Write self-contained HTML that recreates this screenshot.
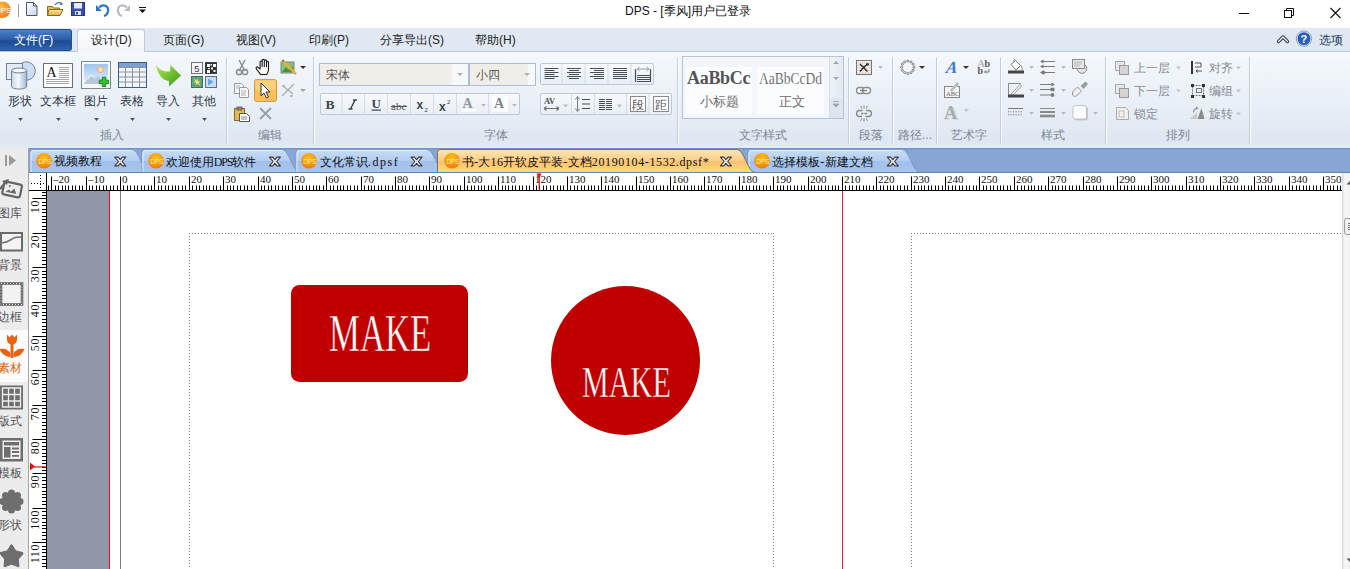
<!DOCTYPE html>
<html><head><meta charset="utf-8">
<style>
*{margin:0;padding:0;box-sizing:border-box}
html,body{width:1350px;height:569px;overflow:hidden;background:#fff;font-family:"Liberation Sans",sans-serif;font-size:12px;color:#222}
.a{position:absolute}
#title{left:0;top:0;width:1350px;height:28px;background:#fff}
#menu{left:0;top:28px;width:1350px;height:24px;background:#dfe8f3;border-bottom:1px solid #b9c9dd}
.mi{top:5px;font-size:12px;line-height:14px;color:#222;white-space:nowrap}
#ribbon{left:0;top:52px;width:1350px;height:97px;background:linear-gradient(#f5f8fc 0%,#e9eff7 55%,#dee7f2 92%,#e3ebf5 100%);border-bottom:1px solid #86a4cf}
#tabbar{left:28px;top:148px;width:1322px;height:25px;background:#86a6d6}
#sidebar{left:0;top:148px;width:29px;height:421px;background:#ececec;border-right:1px solid #a6a6a6}
.sl{left:-2px;font-size:12px;line-height:14px;color:#555;white-space:nowrap}
#hruler{left:29px;top:173px;width:1313px;height:18px;background:#fff;border-bottom:1px solid #000}
#vruler{left:29px;top:191px;width:18px;height:378px;background:#fff;border-right:1px solid #000}
#gray{left:47px;top:191px;width:61px;height:378px;background:#8e98a9}
#canvas{left:108px;top:191px;width:1234px;height:378px;background:#fff;overflow:hidden}
#vscroll{left:1342px;top:173px;width:8px;height:396px;background:linear-gradient(90deg,#e9e9e9,#f7f7f7 30%,#f2f2f2);border-left:1px solid #dadada}
.lbl{top:76px;color:#7b8696;font-size:12px;line-height:14px;white-space:nowrap}
.sep{position:absolute;top:5px;width:1px;height:87px;background:#c2cfe0;box-shadow:1px 0 0 #f8fbff}
.combo{position:absolute;border:1px solid #abbdd3;background:linear-gradient(90deg,#f1eeea 0%,#f1eeea 88%,#f7f8fa 90%);}
.ct{position:absolute;left:6px;top:4px;font-size:12px;line-height:14px;color:#555;font-family:"Liberation Serif",serif}
.dd{position:absolute;top:9px;width:0;height:0;border-left:3px solid transparent;border-right:3px solid transparent;border-top:3px solid #aab0b8}
.bgrp{position:absolute;border:1px solid #bccbdc;border-radius:2px;background:linear-gradient(#f7f9fc,#e9eef5)}
.dis{font-size:12px;line-height:14px;color:#858b92;white-space:nowrap}
.tt{top:155px;font-size:12px;line-height:14px;color:#111;white-space:nowrap;font-family:"Liberation Mono",monospace}
.tt m{font-family:"Liberation Serif",serif;font-size:12px;letter-spacing:.45px}
.rn{font-family:"Liberation Serif",serif;font-size:11px;fill:#111;letter-spacing:0}
.mk{font-family:"Liberation Serif",serif;color:#fff;white-space:nowrap;-webkit-text-stroke:.5px #c00000}
.rv{font-family:"Liberation Serif",serif;font-size:12px;fill:#111;letter-spacing:.6px}
.dh{height:1px;background:repeating-linear-gradient(90deg,#7a7a7a 0 1px,transparent 1px 3px)}
.dv{width:1px;background:repeating-linear-gradient(180deg,#7a7a7a 0 1px,transparent 1px 3px)}
.big{top:42px;font-size:12px;line-height:14px;color:#2c3645;white-space:nowrap}
</style></head><body>
<div id="title" class="a">
<svg class="a" style="left:0;top:0" width="150" height="28">
 <defs><radialGradient id="og" cx="40%" cy="35%" r="70%"><stop offset="0" stop-color="#ffc04a"/><stop offset="1" stop-color="#ef7d08"/></radialGradient>
 <linearGradient id="pg" x1="0" y1="0" x2="1" y2="1"><stop offset="0" stop-color="#fff"/><stop offset="1" stop-color="#c9d3e6"/></linearGradient>
 <linearGradient id="fg" x1="0" y1="0" x2="0" y2="1"><stop offset="0" stop-color="#fde9a0"/><stop offset="1" stop-color="#e2ad3c"/></linearGradient></defs>
 <circle cx="2.5" cy="9.8" r="8.2" fill="url(#og)"/>
 <text x="-5" y="13" font-size="8" fill="#fff" font-family="Liberation Sans">DPS</text>
 <rect x="18" y="4" width="1" height="13" fill="#9a9a9a"/>
 <path d="M26.5 2.5h7l3.5 3.5v9.5h-10.5z" fill="url(#pg)" stroke="#4a5668" stroke-width="1"/>
 <path d="M33.5 2.5v3.5h3.5" fill="none" stroke="#4a5668"/>
 <path d="M47.5 6.5h5l1 1.5h6v7.5h-12z" fill="#e9c060" stroke="#8a6a1a"/>
 <path d="M49 9.5h14l-3 6h-12.5z" fill="url(#fg)" stroke="#8a6a1a"/>
 <path d="M55 5c2-3 5-3 7-1" fill="none" stroke="#3a6fb8" stroke-width="1.3"/><path d="M61 2l2 2.5-3 .8z" fill="#3a6fb8"/>
 <rect x="71.5" y="2.5" width="13" height="13" fill="#3b4fb0" stroke="#2a3580"/>
 <rect x="74" y="3" width="8" height="5.5" fill="#e8ecf6"/>
 <rect x="75" y="11" width="6" height="4" fill="#dde3f0"/><rect x="76" y="12" width="2" height="2.5" fill="#3b4fb0"/>
 <path d="M99 7.5c4-4 10-2 9 4-.5 2.5-2.5 4-4 4.5" fill="none" stroke="#2f72d0" stroke-width="2.2"/>
 <path d="M96 5v6h6z" fill="#2f72d0"/>
 <path d="M127 7.5c-4-4-10-2-9 4 .5 2.5 2.5 4 4 4.5" fill="none" stroke="#b8bcc2" stroke-width="2.2"/>
 <path d="M130 5v6h-6z" fill="#b8bcc2"/>
 <rect x="139" y="7" width="7" height="1" fill="#111"/><path d="M139 9.5h7l-3.5 3.5z" fill="#111"/>
</svg>
<div class="a" style="left:625px;top:3px;font-size:12px;color:#111;line-height:16px;white-space:nowrap">DPS - [季风]用户已登录</div>
<svg class="a" style="left:1230px;top:0" width="120" height="28">
 <rect x="9" y="13" width="10" height="1" fill="#111"/>
 <rect x="54.5" y="10.5" width="7" height="7" fill="none" stroke="#111"/>
 <path d="M56.5 10.5v-2h7v7h-2" fill="none" stroke="#111"/>
 <path d="M100.5 8l10 10M110.5 8l-10 10" stroke="#111" stroke-width="1.1"/>
</svg>
</div>
<div id="menu" class="a">
<div class="a" style="left:0;top:1px;width:72px;height:22px;border-radius:0 3px 3px 0;background:linear-gradient(#4a7fc9 0%,#2d5fab 45%,#1d4a92 55%,#2f62ae 100%);border:1px solid #23508f;border-left:none"></div>
<div class="a mi" style="left:14px;color:#fff">文件(F)</div>
<div class="a" style="left:77px;top:1px;width:68px;height:24px;border-radius:3px 3px 0 0;background:linear-gradient(#fbfcfe,#f2f6fb);border:1px solid #bccbe0;border-bottom:none"></div>
<div class="a mi" style="left:91px">设计(D)</div>
<div class="a mi" style="left:163px">页面(G)</div>
<div class="a mi" style="left:236px">视图(V)</div>
<div class="a mi" style="left:309px">印刷(P)</div>
<div class="a mi" style="left:380px">分享导出(S)</div>
<div class="a mi" style="left:475px">帮助(H)</div>
<svg class="a" style="left:1270px;top:0" width="80" height="24">
 <path d="M8.5 13.5l4.5-4.5 4.5 4.5" fill="none" stroke="#2a3a50" stroke-width="3.2" stroke-linejoin="round" stroke-linecap="round"/><path d="M8.5 13.5l4.5-4.5 4.5 4.5" fill="none" stroke="#fff" stroke-width="1.2" stroke-linejoin="round" stroke-linecap="round"/>
 <circle cx="34" cy="10.7" r="7.7" fill="#e8eef8" stroke="#8aa2c8"/>
 <circle cx="34" cy="10.7" r="6.5" fill="#2a5db8"/>
 <text x="30.5" y="15" font-size="11" font-weight="bold" fill="#fff" font-family="Liberation Sans">?</text>
</svg>
<div class="a mi" style="left:1319px;color:#1e3a5c">选项</div>
</div>
<div id="ribbon" class="a">
<!-- separators -->
<div class="sep" style="left:226px"></div><div class="sep" style="left:313px"></div><div class="sep" style="left:677px"></div>
<div class="sep" style="left:848px"></div><div class="sep" style="left:892px"></div><div class="sep" style="left:936px"></div>
<div class="sep" style="left:1000px"></div><div class="sep" style="left:1105px"></div><div class="sep" style="left:1249px"></div>
<!-- group labels -->
<div class="a lbl" style="left:100px">插入</div>
<div class="a lbl" style="left:258px">编辑</div>
<div class="a lbl" style="left:484px">字体</div>
<div class="a lbl" style="left:739px">文字样式</div>
<div class="a lbl" style="left:859px">段落</div>
<div class="a lbl" style="left:898px">路径...</div>
<div class="a lbl" style="left:951px">艺术字</div>
<div class="a lbl" style="left:1041px">样式</div>
<div class="a lbl" style="left:1166px">排列</div>
<!-- INSERT GROUP -->
<svg class="a" style="left:0;top:0" width="226" height="96">
 <defs>
  <linearGradient id="cyl" x1="0" y1="0" x2="1" y2="0"><stop offset="0" stop-color="#c6d6ea"/><stop offset=".45" stop-color="#f4f8fd"/><stop offset="1" stop-color="#9fb6d6"/></linearGradient>
  <linearGradient id="sky" x1="0" y1="0" x2="0" y2="1"><stop offset="0" stop-color="#9cc6f2"/><stop offset="1" stop-color="#e6f1fc"/></linearGradient>
  <linearGradient id="grn" x1="0" y1="0" x2="1" y2="1"><stop offset="0" stop-color="#b6e84a"/><stop offset="1" stop-color="#2e9a1a"/></linearGradient>
 </defs>
 <!-- shape -->
 <rect x="6.5" y="11.5" width="16" height="16" fill="#e3ecf8" stroke="#6f8090"/>
 <path d="M22.5 10.5A9.2 9.2 0 1 1 22.5 27.5z" fill="#cfdff3" stroke="#6f8090"/>
 <path d="M11.5 18.5v16c0 1.5 3.4 2.5 7.6 2.5s7.6-1 7.6-2.5v-16z" fill="url(#cyl)" stroke="#6f8090"/>
 <ellipse cx="19.1" cy="18.5" rx="7.6" ry="2.4" fill="#f6f9fd" stroke="#6f8090"/>
 <!-- textbox -->
 <rect x="43.5" y="11.5" width="29" height="24" fill="#fff" stroke="#6a6e75"/>
 <text x="46.5" y="25" font-family="Liberation Serif" font-size="14" fill="#111">A</text>
 <path d="M59 15.5h10M59 17.5h10M59 19.5h10M59 21.5h10M59 23.5h10M59 25.5h10M46 27.5h23M46 29.5h23M46 31.5h23" stroke="#8a8e96" stroke-width=".8"/>
 <!-- picture -->
 <rect x="81.5" y="9.5" width="29" height="27" fill="#f4f6f8" stroke="#7f8790"/>
 <rect x="84" y="12" width="24" height="20" fill="url(#sky)"/>
 <path d="M84 32l7-9 4 4 3-3 8 8z" fill="#b9c6d6"/><path d="M88 27l3-4 2 2" fill="none" stroke="#fff"/>
 <circle cx="100.5" cy="17.5" r="3" fill="#fde0b8" stroke="#f2a060"/>
 <path d="M102.3 25.2h3.4v3h3v3.4h-3v3h-3.4v-3h-3v-3.4h3z" fill="#32c42a" stroke="#1a7a1a" stroke-width=".9"/>
 <!-- table -->
 <rect x="118.5" y="10.5" width="28" height="25" fill="#f2f5fa" stroke="#3d5a8c"/>
 <rect x="119" y="11" width="27" height="4" fill="#7d9fd6"/>
 <path d="M119 15.5h27M119 20h27M119 25h27M119 30h27M125.5 15v20M132.5 15v20M139.5 15v20" stroke="#8d949e"/>
 <!-- import arrow -->
 <path d="M156 13Q161 20.5 170 19.5L170.5 13L181 23.5L169 34.5L169 29Q159 28 156 13Z" fill="url(#grn)"/>
 <!-- other -->
 <rect x="191.5" y="10.5" width="11" height="11" fill="#f6f6f6" stroke="#6e737a"/>
 <text x="194" y="19.5" font-size="9.5" fill="#333" font-family="Liberation Mono">5</text>
 <rect x="205.5" y="10.5" width="11" height="11" fill="#333" stroke="#444"/>
 <path d="M207 12h3v3h-3zM213 12h3v3h-3zM207 18h3v3h-3zM211 15.5h2v2h-2zM213.5 18h2v2h-2zM210.5 12h1.5v1.5h-1.5zM208 16h2v1h-2z" fill="#fff"/>
 <rect x="191.5" y="24.5" width="11" height="11" fill="#5aa87a" stroke="#4a6a60"/>
 <path d="M197 26.5l1 2.5 2.5 1-2.5 1-1 2.5-1-2.5-2.5-1 2.5-1z" fill="#f4e87a"/><path d="M194 27l3 3M200 33l-3-3" stroke="#e8e27a" stroke-width="1"/>
 <rect x="205.5" y="24.5" width="11" height="11" fill="#c9dcf6" stroke="#5e6f88"/>
 <path d="M208 26.5v7l5.5-3.5z" fill="#6e9ee6"/>
 <!-- arrows -->
 <path d="M18 66h5l-2.5 3zM56 66h5l-2.5 3zM94 66h5l-2.5 3zM130 66h5l-2.5 3zM166 66h5l-2.5 3zM202 66h5l-2.5 3z" fill="#555"/>
</svg>
<div class="a big" style="left:8px">形状</div>
<div class="a big" style="left:40px">文本框</div>
<div class="a big" style="left:84px">图片</div>
<div class="a big" style="left:120px">表格</div>
<div class="a big" style="left:156px">导入</div>
<div class="a big" style="left:192px">其他</div>
<!-- EDIT GROUP -->
<svg class="a" style="left:226px;top:0" width="87" height="96">
 <!-- scissors -->
 <path d="M13 8l6 11M19 8l-6 11" stroke="#8a8f96" stroke-width="1.5"/>
 <circle cx="13" cy="20" r="2.6" fill="none" stroke="#8a8f96" stroke-width="1.5"/><circle cx="19" cy="20" r="2.6" fill="none" stroke="#8a8f96" stroke-width="1.5"/>
 <!-- hand -->
 <path d="M34.5 22.5c-1-2-3-4-4.2-5.8-.8-1.2.6-2.4 1.8-1.4l2 1.8V10c0-1.3 2-1.3 2 0v4.5V8.3c0-1.3 2.2-1.3 2.2 0v6.2V8.8c0-1.3 2.2-1.3 2.2 0v5.9V10.3c0-1.3 2-1.3 2 0V17c0 2.5-.8 4-1.8 5.5z" fill="#fff" stroke="#1a1a1a" stroke-width="1.1" stroke-linejoin="round"/>
 <!-- picture pencil -->
 <rect x="55" y="10" width="13" height="11" fill="#8fbf6a" stroke="#6a8a9a"/>
 <path d="M56 20l4-5 3 3 4-4v6z" fill="#4f8f3a"/>
 <path d="M56 8l14 14" stroke="#e0b040" stroke-width="2.5"/><path d="M56 8l2 0 0 2z" fill="#555"/>
 <path d="M74 14h6l-3 3z" fill="#333"/>
 <!-- copy -->
 <path d="M8.5 31.5h7l2 2v8h-9z" fill="#f4f4f4" stroke="#9a9a9a"/>
 <path d="M13.5 35.5h7l2 2v8h-9z" fill="#f8f8f8" stroke="#9a9a9a"/>
 <path d="M10 34h4M10 36h4M15 39h5M15 41h5M15 43h5" stroke="#b0b0b0"/>
 <!-- selected pointer -->
 <rect x="28.5" y="27.5" width="22" height="22" rx="2" fill="#f9c056" stroke="#e09a30"/>
 <rect x="29.5" y="28.5" width="20" height="9.5" rx="1" fill="#fcd27c"/>
 <path d="M35 31v13l3-3 2.5 5 2-1-2.5-5h4z" fill="#fff" stroke="#333" stroke-width="1"/>
 <!-- crop pen gray -->
 <path d="M56 44l12-12M57 34l10 8M56 34h3M67 44h-3" stroke="#a8adb4" stroke-width="1.3" fill="none"/>
 <path d="M74 37h6l-3 3z" fill="#a0a5ac"/>
 <!-- paste -->
 <rect x="8.5" y="56.5" width="10" height="12" fill="#e6b84a" stroke="#8a6a2a"/>
 <rect x="11" y="55" width="5" height="3" fill="#888" stroke="#555" stroke-width=".8"/>
 <path d="M13.5 61.5h7l3 3v5h-10z" fill="#fff" stroke="#555"/>
 <path d="M15 65h6M15 67h6" stroke="#888"/>
 <!-- X -->
 <path d="M34 56l11 11M45 56l-11 11" stroke="#9aa0a6" stroke-width="2"/>
</svg>
<!-- STYLE GALLERY -->
<div class="a" style="left:682px;top:4px;width:162px;height:63px;border:1px solid #b4c4d8;background:#f3f6fa"></div>
<div class="a" style="left:686px;top:15px;width:66px;height:47px;background:#fbfcfd"></div>
<div class="a" style="left:757px;top:15px;width:67px;height:47px;background:#fbfcfd"></div>
<div class="a" style="left:829px;top:5px;width:14px;height:61px;background:linear-gradient(90deg,#eef2f7,#e4eaf2);border-left:1px solid #d5dee9"></div>
<div class="a" style="left:687px;top:15.5px;font-family:'Liberation Serif',serif;font-weight:bold;font-size:18px;line-height:20px;color:#555;letter-spacing:-.3px">AaBbCc</div>
<div class="a" style="left:759px;top:16.5px;font-family:'Liberation Serif',serif;font-size:16.5px;line-height:20px;color:#555;transform:scaleX(.82);transform-origin:0 0;-webkit-text-stroke:.2px #fbfcfd">AaBbCcDd</div>
<div class="a" style="left:700px;top:43px;font-size:12.5px;line-height:14px;color:#6e6e6e;font-family:'Liberation Serif',serif">小标题</div>
<div class="a" style="left:779px;top:43px;font-size:12.5px;line-height:14px;color:#6e6e6e;font-family:'Liberation Serif',serif">正文</div>
<svg class="a" style="left:829px;top:0" width="15" height="70">
 <path d="M4 12h6l-3-3z" fill="#9aa3ae"/><path d="M4 25h6l-3 3z" fill="#9aa3ae"/>
 <rect x="1" y="46" width="13" height="20" fill="#dfe5ec"/>
 <path d="M4 49.5h6M4 52h6l-3 3z" stroke="#9aa3ae" fill="#9aa3ae" stroke-width=".8"/>
</svg>
<!-- PARA / PATH / ART -->
<svg class="a" style="left:848px;top:0" width="152" height="96">
 <rect x="8.5" y="8.5" width="15" height="14" fill="#f6f2ee" stroke="#777"/>
 <path d="M9 11h14M9 13.5h14M9 16h14M9 18.5h14M9 21h14" stroke="#c8c0b8" stroke-width=".8"/>
 <path d="M12 12l3.5 3.5 3.5-3M12 19.5l3.5-4 4 4" stroke="#2a2a2a" stroke-width="1.4" fill="none"/><circle cx="19.5" cy="12.2" r="1.3" fill="#2a2a2a"/>
 <path d="M30 14h5l-2.5 3z" fill="#b8bec6"/>
 <rect x="8.5" y="35.5" width="8" height="6" rx="3" fill="#fff" stroke="#8a8a8a" stroke-width="1.3"/>
 <rect x="14.5" y="35.5" width="8" height="6" rx="3" fill="#fff" stroke="#8a8a8a" stroke-width="1.3"/>
 <path d="M12 38.5h7" stroke="#777" stroke-width="1.3"/>
 <path d="M14.5 58.5h-3a3 3 0 0 0 0 6h2.5M17.5 64.5h3a3 3 0 0 0 0-6h-2.5M13 61.5h2.5M16.5 61.5h2.5" fill="none" stroke="#8a8a8a" stroke-width="1.3"/>
 <path d="M16 53.5v3M12.5 54l1.5 2.5M19.5 54l-1.5 2.5M16 66.5v3M12.5 69l1.5-2.5M19.5 69l-1.5-2.5" stroke="#888" stroke-width="1"/>
 <!-- path circle -->
 <circle cx="66.00" cy="15.25" r="1.05" fill="none" stroke="#666" stroke-width=".8"/><circle cx="65.17" cy="18.35" r="1.05" fill="none" stroke="#666" stroke-width=".8"/><circle cx="62.90" cy="20.62" r="1.05" fill="none" stroke="#666" stroke-width=".8"/><circle cx="59.80" cy="21.45" r="1.05" fill="none" stroke="#666" stroke-width=".8"/><circle cx="56.70" cy="20.62" r="1.05" fill="none" stroke="#666" stroke-width=".8"/><circle cx="54.43" cy="18.35" r="1.05" fill="none" stroke="#666" stroke-width=".8"/><circle cx="53.60" cy="15.25" r="1.05" fill="none" stroke="#666" stroke-width=".8"/><circle cx="54.43" cy="12.15" r="1.05" fill="none" stroke="#666" stroke-width=".8"/><circle cx="56.70" cy="9.88" r="1.05" fill="none" stroke="#666" stroke-width=".8"/><circle cx="59.80" cy="9.05" r="1.05" fill="none" stroke="#666" stroke-width=".8"/><circle cx="62.90" cy="9.88" r="1.05" fill="none" stroke="#666" stroke-width=".8"/><circle cx="65.17" cy="12.15" r="1.05" fill="none" stroke="#666" stroke-width=".8"/>
 <path d="M71 14h6l-3 3z" fill="#333"/>
 <!-- art A -->
 <text x="97.5" y="21.5" font-family="Liberation Serif" font-style="italic" font-weight="bold" font-size="17" fill="#3f78d0" transform="skewX(-8) translate(3 0)">A</text>
 <path d="M115 14h6l-3 3z" fill="#333"/>
 <text x="129.5" y="14.5" font-family="Liberation Serif" font-weight="bold" font-size="10" fill="#b0b4ba">A</text>
 <text x="136.5" y="14.5" font-family="Liberation Serif" font-weight="bold" font-size="10" fill="#555">b</text>
 <text x="129.5" y="22" font-family="Liberation Serif" font-weight="bold" font-size="10" fill="#555">b</text>
 <path d="M136.5 20h4.5v-3M136.5 20l1.5-1.5M136.5 20l1.5 1.5" stroke="#777" fill="none"/>
 <rect x="96.5" y="34.5" width="15" height="11" fill="#f4f4f4" stroke="#888"/>
 <text x="98" y="43.5" font-size="6.5" fill="#666" font-family="Liberation Serif">ABC</text>
 <path d="M103 39l7-8" stroke="#fff" stroke-width="3.4"/><path d="M103 39l7-8" stroke="#999" stroke-width="2.2"/><path d="M103.5 38.5l6-7" stroke="#eee" stroke-width=".8"/>
 <text x="98" y="67.5" font-family="Liberation Serif" font-weight="bold" font-size="18" fill="#d8dadc" >A</text>
 <text x="96" y="66.5" font-family="Liberation Serif" font-weight="bold" font-size="18" fill="#a8acb2">A</text>
 <path d="M116 57h5l-2.5 3z" fill="#c0c4ca"/>
</svg>
<!-- STYLE GROUP -->
<svg class="a" style="left:1000px;top:0" width="105" height="96">
 <path d="M11 12.5l4.5-4 5 5-4.5 4.5z" fill="#fafafa" stroke="#777"/><path d="M13 9.5l2-2.5" stroke="#777"/><path d="M20.5 13.5q2.5 2 1.5 5" stroke="#aaa" fill="none" stroke-width="1.2"/>
 <rect x="8" y="18.5" width="16" height="3" fill="#454545"/>
 <path d="M29 14h5l-2.5 3z" fill="#b8bec6"/>
 <path d="M42 9.5h13M42 14.5h13M42 20.5h13" stroke="#7a7a7a"/><path d="M40 9.5l3.5-2v4zM40 14.5l3.5-2v4zM40 20.5l3.5-2.2v4.4zM46 20.5l-2.5-2.2v4.4z" fill="#7a7a7a"/>
 <path d="M61 14h5l-2.5 3z" fill="#b8bec6"/>
 <circle cx="82" cy="16.5" r="4.8" fill="#e4e4e4" stroke="#8a8a8a"/>
 <rect x="72.5" y="7.5" width="12" height="9" fill="#e8e8e8" stroke="#8a8a8a"/>
 <path d="M74 10h8M74 12h8M74 14h6" stroke="#aaa" stroke-width=".8"/>
 <!-- row2 -->
 <path d="M8.5 43V31.5H21" fill="none" stroke="#8a8a8a"/>
 <path d="M11 42l9-9.5 1.5 1.5-9 9.5z" fill="#f4f4f4" stroke="#8a8a8a" stroke-width=".8"/>
 <rect x="8" y="42.5" width="16" height="3" fill="#454545"/>
 <path d="M29 37h5l-2.5 3z" fill="#b8bec6"/>
 <path d="M40 32.5h13M40 37.5h12M40 43h12" stroke="#7a7a7a"/><path d="M55 32.5l-3.5-2v4z" fill="#7a7a7a"/><rect x="50.5" y="35.8" width="4" height="3.4" fill="#7a7a7a"/><circle cx="52.5" cy="43" r="1.9" fill="#7a7a7a"/>
 <path d="M61 37h5l-2.5 3z" fill="#b8bec6"/>
 <path d="M72.5 40l5-5 4 4-5 5c-1 .5-3 .5-4-1z" fill="#f2f2f2" stroke="#8a8a8a" stroke-width=".9"/>
 <path d="M80.5 34l5-4.5 2.5 2.5-4.5 5z" fill="#9a9a9a"/>
 <!-- row3 -->
 <path d="M8 56.5h15" stroke="#7a7a7a"/>
 <path d="M8 59.8h15M8 62.8h15" stroke="#7a7a7a" stroke-dasharray="1.2 1.3"/>
 <path d="M29 60h5l-2.5 3z" fill="#b8bec6"/>
 <path d="M40 56.5h15" stroke="#8a8a8a"/><path d="M40 60h15" stroke="#8a8a8a" stroke-width="2"/><path d="M40 64h15" stroke="#8a8a8a" stroke-width="2.6"/>
 <path d="M61 60h5l-2.5 3z" fill="#b8bec6"/>
 <rect x="74" y="54.5" width="14" height="14" rx="2.5" fill="#c8c8c8"/>
 <rect x="73" y="53.5" width="13.5" height="13.5" rx="2.5" fill="#fcfcfc" stroke="#b8b8b8" stroke-width=".8"/>
 <path d="M93 60h5l-2.5 3z" fill="#b8bec6"/>
</svg>
<!-- ARRANGE GROUP -->
<svg class="a" style="left:1105px;top:0" width="144" height="96">
 <rect x="10.5" y="9.5" width="9" height="9" fill="#e6e6e6" stroke="#aaa"/><rect x="14.5" y="13.5" width="9" height="9" fill="#d4d4d4" stroke="#999"/>
 <rect x="10.5" y="32.5" width="9" height="9" fill="#e6e6e6" stroke="#aaa"/><rect x="14.5" y="36.5" width="9" height="9" fill="#d4d4d4" stroke="#999"/>
 <path d="M11.5 55.5h9l3 3v9h-12z" fill="#f0f0f0" stroke="#aaa"/><rect x="14" y="59" width="5" height="6" fill="none" stroke="#bbb"/>
 <path d="M71 14.5h5l-2.5 3zM71 37.5h5l-2.5 3z" fill="#c0c4ca"/>
 <rect x="86" y="9" width="2" height="13" fill="#333"/><path d="M90 11h6v4h-6M91 19h6M91 19l2-1.5M91 19l2 1.5" stroke="#555" fill="none"/>
 <rect x="87.5" y="33.5" width="11" height="10" fill="none" stroke="#777" stroke-dasharray="2 1"/>
 <rect x="86" y="32" width="3" height="3" fill="#333"/><rect x="97" y="32" width="3" height="3" fill="#333"/><rect x="86" y="43" width="3" height="3" fill="#333"/><rect x="97" y="43" width="3" height="3" fill="#333"/>
 <rect x="91.5" y="36.5" width="5" height="4" fill="none" stroke="#777"/>
 <path d="M85 67l7-6.5V67z" fill="#c8c8c8"/><path d="M92.5 67l4-11 3 11z" fill="#8a8a8a"/><path d="M88.5 60.5q0-3.5 3.5-4" stroke="#888" fill="none" stroke-width="1.1"/><path d="M91 54.5l2.5 1.5-2.5 1.8z" fill="#888"/>
 <path d="M131 14.5h5l-2.5 3zM131 37.5h5l-2.5 3zM131 60.5h5l-2.5 3z" fill="#c0c4ca"/>
</svg>
<div class="a dis" style="left:1134px;top:9px">上一层</div>
<div class="a dis" style="left:1134px;top:32px">下一层</div>
<div class="a dis" style="left:1134px;top:55px">锁定</div>
<div class="a dis" style="left:1209px;top:9px">对齐</div>
<div class="a dis" style="left:1209px;top:32px">编组</div>
<div class="a dis" style="left:1209px;top:55px">旋转</div>
<!-- FONT GROUP -->
<div class="a combo" style="left:319px;top:11px;width:150px;height:23px"><span class="ct">宋体</span><i class="dd" style="left:137px"></i></div>
<div class="a combo" style="left:469px;top:11px;width:67px;height:23px"><span class="ct">小四</span><i class="dd" style="left:54px"></i></div>
<div class="a bgrp" style="left:320px;top:41px;width:200px;height:22px"></div>
<div class="a bgrp" style="left:540px;top:11px;width:114px;height:22px"></div>
<div class="a bgrp" style="left:540px;top:41px;width:132px;height:22px"></div>
<svg class="a" style="left:313px;top:0" width="364" height="96">
 <g stroke="#d3dde9"><path d="M29 42v20M51.5 42v20M74.5 42v20M97.5 42v20M120.5 42v20M143.5 42v20M175.5 42v20"/>
 <path d="M249 12v20M272 12v20M295 12v20M318 12v20"/>
 <path d="M258.5 42v20M281.5 42v20M313.5 42v20M336 42v20"/></g>
 <text x="12.5" y="57" font-family="Liberation Serif" font-weight="bold" font-size="13.5" fill="#3e4550">B</text>
 <path d="M40 48h4M35.5 57h4M42 48l-4.5 9" stroke="#3e4550" stroke-width="1.5" fill="none"/>
 <text x="58.5" y="56" font-family="Liberation Serif" font-weight="bold" font-size="13" fill="#3e4550">U</text><rect x="58.5" y="57.5" width="9.5" height="1.2" fill="#3e4550"/>
 <text x="78" y="58" font-family="Liberation Serif" font-size="11" fill="#555">abc</text><rect x="78" y="54" width="16" height="1" fill="#555"/>
 <text x="103.5" y="57" font-family="Liberation Sans" font-weight="bold" font-size="12" fill="#3e4550">x</text><text x="111.5" y="60" font-size="6" fill="#3e4550">2</text>
 <text x="126" y="59" font-family="Liberation Sans" font-weight="bold" font-size="12" fill="#3e4550">x</text><text x="134" y="52" font-size="6" fill="#3e4550">2</text>
 <text x="149.5" y="55.8" font-family="Liberation Serif" font-weight="bold" font-size="14" fill="#8f959c">A</text><rect x="148" y="57.5" width="16" height="2" fill="#fff"/>
 <path d="M168 52h5l-2.5 3z" fill="#b8bec6"/>
 <rect x="179" y="43.8" width="16" height="16" fill="#fff" opacity=".85"/>
 <text x="181" y="55.8" font-family="Liberation Serif" font-weight="bold" font-size="14" fill="#7d838b">A</text>
 <path d="M199 52h5l-2.5 3z" fill="#b8bec6"/>
 <!-- align -->
 <path d="M231.5 16.5h14M231.5 18.5h10M231.5 20.5h14M231.5 22.5h10M231.5 24.5h14M231.5 26.5h10M254.0 16.5h14M256.0 18.5h10M254.0 20.5h14M256.0 22.5h10M254.0 24.5h14M256.0 26.5h10M277 16.5h14M281 18.5h10M277 20.5h14M281 22.5h10M277 24.5h14M281 26.5h10M300 16.5h14M300 18.5h14M300 20.5h14M300 22.5h14M300 24.5h14M300 26.5h14" stroke="#4a4f57" stroke-width="1"/>
 <path d="M324 23.5h13M324 25.5h13M324 27.5h13M324 29.5h13" stroke="#4a4f57"/>
 <path d="M322.5 17v13M337.5 17v13" stroke="#4a4f57" stroke-width="1.2"/>
 <path d="M324 17h12M324 17l2.5-2M324 17l2.5 2M336 17l-2.5-2M336 17l-2.5 2" stroke="#9aa0a6" stroke-width="1" fill="none"/>
 <text x="231" y="51.5" font-family="Liberation Serif" font-weight="bold" font-size="8.5" fill="#4a4f57">AV</text>
 <path d="M231 56.5h15M231 56.5l2.5-2M231 56.5l2.5 2M246 56.5l-2.5-2M246 56.5l-2.5 2" stroke="#6a7078" stroke-width="1.1" fill="none"/>
 <path d="M250 52.5h5l-2.5 3z" fill="#b8bec6"/>
 <path d="M264.5 44.5v15M264.5 44.5l-2 3M264.5 44.5l2 3M264.5 59.5l-2-3M264.5 59.5l2-3" stroke="#7a8088" fill="none"/>
 <path d="M269 47.5h8M269 52h8M269 56.5h8" stroke="#4a4f57" stroke-width="1.2"/>
 <path d="M286 47.5h13M286 49.5h13M286 51.5h13M286 53.5h13M286 55.5h13M286 57.5h13" stroke="#4a4f57" stroke-width="1"/>
 <path d="M292.5 47v11" stroke="#eef2f7" stroke-width="1"/>
 <path d="M304 52.5h5l-2.5 3z" fill="#b8bec6"/>
 <rect x="317.5" y="44.5" width="15" height="15" fill="#fff" stroke="#8a8a8a"/>
 <text x="318.5" y="57" font-size="12" fill="#555" font-family="Liberation Serif">段</text>
 <rect x="340.5" y="44.5" width="15" height="15" fill="#fff" stroke="#8a8a8a"/>
 <text x="341.5" y="57" font-size="12" fill="#555" font-family="Liberation Serif">距</text>
</svg>
</div>
<div id="tabs"><svg class="a" style="left:0;top:0" width="1350" height="175"><defs><linearGradient id="tb" x1="0" y1="0" x2="0" y2="1"><stop offset="0" stop-color="#c8dcf6"/><stop offset=".48" stop-color="#b3cdf1"/><stop offset=".5" stop-color="#a2c0ec"/><stop offset="1" stop-color="#a8c5ef"/></linearGradient><linearGradient id="ta" x1="0" y1="0" x2="0" y2="1"><stop offset="0" stop-color="#fde6b8"/><stop offset=".48" stop-color="#fcce86"/><stop offset=".52" stop-color="#fbc172"/><stop offset="1" stop-color="#fddc72"/></linearGradient><radialGradient id="dg" cx="50%" cy="30%" r="70%"><stop offset="0" stop-color="#ffc21a"/><stop offset="1" stop-color="#f07a0a"/></radialGradient></defs><rect x="28" y="148" width="1322" height="25" fill="#87a6d5"/><rect x="28" y="148" width="1322" height="1.5" fill="#7394c6"/><path d="M30 172.5V152.5Q30 149.5 33 149.5H132C139 149.5 143 172.5 150 172.5Z" fill="url(#tb)" stroke="#7c9bcb" stroke-width="1"/><path d="M31 172V153Q31 150.5 33.5 150.5H131.5" fill="none" stroke="#e6f0fc" stroke-width="1"/><path d="M142 172.5V152.5Q142 149.5 145 149.5H282C289 149.5 293 172.5 300 172.5Z" fill="url(#tb)" stroke="#7c9bcb" stroke-width="1"/><path d="M143 172V153Q143 150.5 145.5 150.5H281.5" fill="none" stroke="#e6f0fc" stroke-width="1"/><path d="M296 172.5V152.5Q296 149.5 299 149.5H427C434 149.5 438 172.5 445 172.5Z" fill="url(#tb)" stroke="#7c9bcb" stroke-width="1"/><path d="M297 172V153Q297 150.5 299.5 150.5H426.5" fill="none" stroke="#e6f0fc" stroke-width="1"/><path d="M748 172.5V152.5Q748 149.5 751 149.5H902C909 149.5 913 172.5 920 172.5Z" fill="url(#tb)" stroke="#7c9bcb" stroke-width="1"/><path d="M749 172V153Q749 150.5 751.5 150.5H901.5" fill="none" stroke="#e6f0fc" stroke-width="1"/><path d="M437.5 172.5V152.5Q437.5 149.5 440.5 149.5H737C744 149.5 748 172.5 755 172.5Z" fill="url(#ta)" stroke="#7d6f58" stroke-width="1"/><rect x="28" y="172" width="1322" height="1.5" fill="#6283b6"/><circle cx="44" cy="160.8" r="7.8" fill="url(#dg)"/><text x="38.300000000000004" y="163.6" font-family="Liberation Sans" font-size="6.6" letter-spacing="-.25" fill="#fff2a0">DPS</text><path d="M114.80 157.10L118.20 157.10L120.30 159.70L122.40 157.10L125.80 157.10L122.10 161.50L125.80 165.90L122.40 165.90L120.30 163.30L118.20 165.90L114.80 165.90L118.50 161.50Z" fill="#ebe8ee" stroke="#3c3a38" stroke-width="1.1" stroke-linejoin="round"/><circle cx="156" cy="160.8" r="7.8" fill="url(#dg)"/><text x="150.29999999999998" y="163.6" font-family="Liberation Sans" font-size="6.6" letter-spacing="-.25" fill="#fff2a0">DPS</text><path d="M269.40 157.10L272.80 157.10L274.90 159.70L277.00 157.10L280.40 157.10L276.70 161.50L280.40 165.90L277.00 165.90L274.90 163.30L272.80 165.90L269.40 165.90L273.10 161.50Z" fill="#ebe8ee" stroke="#3c3a38" stroke-width="1.1" stroke-linejoin="round"/><circle cx="309" cy="160.8" r="7.8" fill="url(#dg)"/><text x="303.3" y="163.6" font-family="Liberation Sans" font-size="6.6" letter-spacing="-.25" fill="#fff2a0">DPS</text><path d="M411.10 157.10L414.50 157.10L416.60 159.70L418.70 157.10L422.10 157.10L418.40 161.50L422.10 165.90L418.70 165.90L416.60 163.30L414.50 165.90L411.10 165.90L414.80 161.50Z" fill="#ebe8ee" stroke="#3c3a38" stroke-width="1.1" stroke-linejoin="round"/><circle cx="762" cy="160.8" r="7.8" fill="url(#dg)"/><text x="756.3000000000001" y="163.6" font-family="Liberation Sans" font-size="6.6" letter-spacing="-.25" fill="#fff2a0">DPS</text><path d="M887.30 157.10L890.70 157.10L892.80 159.70L894.90 157.10L898.30 157.10L894.60 161.50L898.30 165.90L894.90 165.90L892.80 163.30L890.70 165.90L887.30 165.90L891.00 161.50Z" fill="#ebe8ee" stroke="#3c3a38" stroke-width="1.1" stroke-linejoin="round"/><circle cx="452" cy="160.8" r="7.8" fill="url(#dg)"/><text x="446.3" y="163.6" font-family="Liberation Sans" font-size="6.6" letter-spacing="-.25" fill="#fff2a0">DPS</text><path d="M720.40 157.10L723.80 157.10L725.90 159.70L728.00 157.10L731.40 157.10L727.70 161.50L731.40 165.90L728.00 165.90L725.90 163.30L723.80 165.90L720.40 165.90L724.10 161.50Z" fill="#ebe8ee" stroke="#3c3a38" stroke-width="1.1" stroke-linejoin="round"/></svg><div class="a tt" style="left:53.8px">视频教程</div><div class="a tt" style="left:165.7px">欢迎使用<m style="letter-spacing:-1.2px">DPS</m>软件</div><div class="a tt" style="left:319.8px">文化常识<m style="letter-spacing:1.6px">.dpsf</m></div><div class="a tt" style="left:772.2px">选择模板<m>-</m>新建文档</div><div class="a tt" style="left:462px">书<m>-</m>大<m>16</m>开软皮平装<m>-</m>文档<m style="letter-spacing:.62px">20190104-1532.dpsf*</m></div></div>
<div id="sidebar" class="a">
<div class="a" style="left:0;top:181.5px;width:28px;height:52px;background:#fcfcfc"></div>
<svg class="a" style="left:0;top:0" width="28" height="421">
 <!-- collapse -->
 <rect x="5" y="7" width="2" height="11" fill="#9a9a9a"/><path d="M9 7v11l7-5.5z" fill="#9a9a9a"/>
 <!-- gallery 图库 icon y181-200 -->
 <g transform="rotate(12 12 42)"><rect x="3" y="35" width="18" height="13" rx="2" fill="none" stroke="#666" stroke-width="2.2"/>
 <path d="M6 45l3-3 2 2 3-4 3 5z" fill="#666"/><circle cx="9" cy="38.5" r="1" fill="#666"/></g>
 <path d="M0 41l5-6" stroke="#666" stroke-width="2.2"/><path d="M2 33l7-2-2 6z" fill="#666"/>
 <!-- 背景 y232-252 -->
 <rect x="1" y="85" width="21" height="17.5" fill="#f4f4f4" stroke="#6a6a6a" stroke-width="2"/>
 <path d="M1 95c6 0 8-2 11-4s4-2 9-2" fill="none" stroke="#777" stroke-width="1.6"/>
 <!-- 边框 y282-305 -->
 <rect x="1" y="135.5" width="21" height="21" fill="#f2f2f2" stroke="#666" stroke-width="2.6"/>
 <rect x="1" y="135.5" width="21" height="21" fill="none" stroke="#eee" stroke-width=".9" stroke-dasharray="1 2"/>
 <!-- 素材 flower y334-358 -->
 <path d="M7 186.5l2.5 3 2.5-3 2.5 3 2.5-3v5c0 3-2.5 5-5 5s-5-2-5-5z" fill="#e8620f"/>
 <rect x="10.5" y="195" width="3" height="15" fill="#e8620f"/>
 <path d="M10.5 209c-5 0-9-3-11-8 5-1 10 1 11 5z" fill="#e8620f"/>
 <path d="M13.5 209c5 0 9-3 11-8-5-1-10 1-11 5z" fill="#e8620f"/>
 <!-- 版式 grid y386-409 -->
 <rect x="0" y="237.5" width="23" height="24" fill="#6e6e6e"/>
 <path d="M2.5 240v19h18v-19zM2.5 246.5h18M2.5 253h18M8.5 240v19M14.5 240v19" fill="none" stroke="#f0f0f0" stroke-width="1.3"/>
 <!-- 模板 y438-462 -->
 <rect x="0" y="290" width="23" height="23.5" fill="#6e6e6e"/>
 <rect x="2.5" y="292.5" width="18" height="18.5" fill="#f0f0f0"/>
 <rect x="4" y="294" width="15" height="3.5" fill="#6e6e6e"/>
 <rect x="4" y="299" width="6.5" height="10.5" fill="#6e6e6e"/>
 <path d="M12 300.5h7M12 304h7M12 307.8h7" stroke="#6e6e6e" stroke-width="1.8"/>
 <!-- 形状 blob y490-513 -->
 <g fill="#6e6e6e"><circle cx="11.5" cy="353.5" r="9.5"/>
 <circle cx="11.5" cy="345" r="3.5"/><circle cx="11.5" cy="362" r="3.5"/><circle cx="3" cy="353.5" r="3.5"/><circle cx="20" cy="353.5" r="3.5"/>
 <circle cx="5.5" cy="347.5" r="3.5"/><circle cx="17.5" cy="347.5" r="3.5"/><circle cx="5.5" cy="359.5" r="3.5"/><circle cx="17.5" cy="359.5" r="3.5"/></g>
 <!-- star y543-568 -->
 <path d="M11.50 397.60L15.26 403.62L22.15 405.34L17.59 410.78L18.08 417.86L11.50 415.20L4.92 417.86L5.41 410.78L0.85 405.34L7.74 403.62Z" fill="#6e6e6e" stroke="#6e6e6e" stroke-width="2.6" stroke-linejoin="round"/>
</svg>
<div class="a sl" style="top:58px">图库</div>
<div class="a sl" style="top:110px">背景</div>
<div class="a sl" style="top:162px">边框</div>
<div class="a sl" style="top:213px;color:#e0620c">素材</div>
<div class="a sl" style="top:266px">版式</div>
<div class="a sl" style="top:318px">模板</div>
<div class="a sl" style="top:370px">形状</div>
</div>
<svg class="a" style="left:0;top:173px" width="1342" height="18">
<rect x="29" y="0" width="1313" height="17" fill="#fff"/>
<rect x="29" y="17" width="1313" height="1" fill="#000"/>
<path d="M48.5 12.5V17M51.5 3.5V17M55.5 12.5V17M58.5 12.5V17M62.5 12.5V17M65.5 12.5V17M68.5 12.5V17M72.5 12.5V17M75.5 12.5V17M79.5 12.5V17M82.5 12.5V17M86.5 3.5V17M89.5 12.5V17M92.5 12.5V17M96.5 12.5V17M99.5 12.5V17M103.5 12.5V17M106.5 12.5V17M110.5 12.5V17M113.5 12.5V17M117.5 12.5V17M120.5 3.5V17M123.5 12.5V17M127.5 12.5V17M130.5 12.5V17M134.5 12.5V17M137.5 12.5V17M141.5 12.5V17M144.5 12.5V17M148.5 12.5V17M151.5 12.5V17M154.5 3.5V17M158.5 12.5V17M161.5 12.5V17M165.5 12.5V17M168.5 12.5V17M172.5 12.5V17M175.5 12.5V17M178.5 12.5V17M182.5 12.5V17M185.5 12.5V17M189.5 3.5V17M192.5 12.5V17M196.5 12.5V17M199.5 12.5V17M203.5 12.5V17M206.5 12.5V17M209.5 12.5V17M213.5 12.5V17M216.5 12.5V17M220.5 12.5V17M223.5 3.5V17M227.5 12.5V17M230.5 12.5V17M233.5 12.5V17M237.5 12.5V17M240.5 12.5V17M244.5 12.5V17M247.5 12.5V17M251.5 12.5V17M254.5 12.5V17M258.5 3.5V17M261.5 12.5V17M264.5 12.5V17M268.5 12.5V17M271.5 12.5V17M275.5 12.5V17M278.5 12.5V17M282.5 12.5V17M285.5 12.5V17M288.5 12.5V17M292.5 3.5V17M295.5 12.5V17M299.5 12.5V17M302.5 12.5V17M306.5 12.5V17M309.5 12.5V17M313.5 12.5V17M316.5 12.5V17M319.5 12.5V17M323.5 12.5V17M326.5 3.5V17M330.5 12.5V17M333.5 12.5V17M337.5 12.5V17M340.5 12.5V17M343.5 12.5V17M347.5 12.5V17M350.5 12.5V17M354.5 12.5V17M357.5 12.5V17M361.5 3.5V17M364.5 12.5V17M368.5 12.5V17M371.5 12.5V17M374.5 12.5V17M378.5 12.5V17M381.5 12.5V17M385.5 12.5V17M388.5 12.5V17M392.5 12.5V17M395.5 3.5V17M398.5 12.5V17M402.5 12.5V17M405.5 12.5V17M409.5 12.5V17M412.5 12.5V17M416.5 12.5V17M419.5 12.5V17M423.5 12.5V17M426.5 12.5V17M429.5 3.5V17M433.5 12.5V17M436.5 12.5V17M440.5 12.5V17M443.5 12.5V17M447.5 12.5V17M450.5 12.5V17M453.5 12.5V17M457.5 12.5V17M460.5 12.5V17M464.5 3.5V17M467.5 12.5V17M471.5 12.5V17M474.5 12.5V17M478.5 12.5V17M481.5 12.5V17M484.5 12.5V17M488.5 12.5V17M491.5 12.5V17M495.5 12.5V17M498.5 3.5V17M502.5 12.5V17M505.5 12.5V17M508.5 12.5V17M512.5 12.5V17M515.5 12.5V17M519.5 12.5V17M522.5 12.5V17M526.5 12.5V17M529.5 12.5V17M533.5 3.5V17M536.5 12.5V17M539.5 12.5V17M543.5 12.5V17M546.5 12.5V17M550.5 12.5V17M553.5 12.5V17M557.5 12.5V17M560.5 12.5V17M563.5 12.5V17M567.5 3.5V17M570.5 12.5V17M574.5 12.5V17M577.5 12.5V17M581.5 12.5V17M584.5 12.5V17M588.5 12.5V17M591.5 12.5V17M594.5 12.5V17M598.5 12.5V17M601.5 3.5V17M605.5 12.5V17M608.5 12.5V17M612.5 12.5V17M615.5 12.5V17M618.5 12.5V17M622.5 12.5V17M625.5 12.5V17M629.5 12.5V17M632.5 12.5V17M636.5 3.5V17M639.5 12.5V17M643.5 12.5V17M646.5 12.5V17M649.5 12.5V17M653.5 12.5V17M656.5 12.5V17M660.5 12.5V17M663.5 12.5V17M667.5 12.5V17M670.5 3.5V17M673.5 12.5V17M677.5 12.5V17M680.5 12.5V17M684.5 12.5V17M687.5 12.5V17M691.5 12.5V17M694.5 12.5V17M698.5 12.5V17M701.5 12.5V17M704.5 3.5V17M708.5 12.5V17M711.5 12.5V17M715.5 12.5V17M718.5 12.5V17M722.5 12.5V17M725.5 12.5V17M728.5 12.5V17M732.5 12.5V17M735.5 12.5V17M739.5 3.5V17M742.5 12.5V17M746.5 12.5V17M749.5 12.5V17M753.5 12.5V17M756.5 12.5V17M759.5 12.5V17M763.5 12.5V17M766.5 12.5V17M770.5 12.5V17M773.5 3.5V17M777.5 12.5V17M780.5 12.5V17M783.5 12.5V17M787.5 12.5V17M790.5 12.5V17M794.5 12.5V17M797.5 12.5V17M801.5 12.5V17M804.5 12.5V17M808.5 3.5V17M811.5 12.5V17M814.5 12.5V17M818.5 12.5V17M821.5 12.5V17M825.5 12.5V17M828.5 12.5V17M832.5 12.5V17M835.5 12.5V17M838.5 12.5V17M842.5 3.5V17M845.5 12.5V17M849.5 12.5V17M852.5 12.5V17M856.5 12.5V17M859.5 12.5V17M863.5 12.5V17M866.5 12.5V17M869.5 12.5V17M873.5 12.5V17M876.5 3.5V17M880.5 12.5V17M883.5 12.5V17M887.5 12.5V17M890.5 12.5V17M893.5 12.5V17M897.5 12.5V17M900.5 12.5V17M904.5 12.5V17M907.5 12.5V17M911.5 3.5V17M914.5 12.5V17M918.5 12.5V17M921.5 12.5V17M924.5 12.5V17M928.5 12.5V17M931.5 12.5V17M935.5 12.5V17M938.5 12.5V17M942.5 12.5V17M945.5 3.5V17M948.5 12.5V17M952.5 12.5V17M955.5 12.5V17M959.5 12.5V17M962.5 12.5V17M966.5 12.5V17M969.5 12.5V17M973.5 12.5V17M976.5 12.5V17M979.5 3.5V17M983.5 12.5V17M986.5 12.5V17M990.5 12.5V17M993.5 12.5V17M997.5 12.5V17M1000.5 12.5V17M1003.5 12.5V17M1007.5 12.5V17M1010.5 12.5V17M1014.5 3.5V17M1017.5 12.5V17M1021.5 12.5V17M1024.5 12.5V17M1028.5 12.5V17M1031.5 12.5V17M1034.5 12.5V17M1038.5 12.5V17M1041.5 12.5V17M1045.5 12.5V17M1048.5 3.5V17M1052.5 12.5V17M1055.5 12.5V17M1058.5 12.5V17M1062.5 12.5V17M1065.5 12.5V17M1069.5 12.5V17M1072.5 12.5V17M1076.5 12.5V17M1079.5 12.5V17M1083.5 3.5V17M1086.5 12.5V17M1089.5 12.5V17M1093.5 12.5V17M1096.5 12.5V17M1100.5 12.5V17M1103.5 12.5V17M1107.5 12.5V17M1110.5 12.5V17M1113.5 12.5V17M1117.5 3.5V17M1120.5 12.5V17M1124.5 12.5V17M1127.5 12.5V17M1131.5 12.5V17M1134.5 12.5V17M1138.5 12.5V17M1141.5 12.5V17M1144.5 12.5V17M1148.5 12.5V17M1151.5 3.5V17M1155.5 12.5V17M1158.5 12.5V17M1162.5 12.5V17M1165.5 12.5V17M1168.5 12.5V17M1172.5 12.5V17M1175.5 12.5V17M1179.5 12.5V17M1182.5 12.5V17M1186.5 3.5V17M1189.5 12.5V17M1193.5 12.5V17M1196.5 12.5V17M1199.5 12.5V17M1203.5 12.5V17M1206.5 12.5V17M1210.5 12.5V17M1213.5 12.5V17M1217.5 12.5V17M1220.5 3.5V17M1223.5 12.5V17M1227.5 12.5V17M1230.5 12.5V17M1234.5 12.5V17M1237.5 12.5V17M1241.5 12.5V17M1244.5 12.5V17M1248.5 12.5V17M1251.5 12.5V17M1254.5 3.5V17M1258.5 12.5V17M1261.5 12.5V17M1265.5 12.5V17M1268.5 12.5V17M1272.5 12.5V17M1275.5 12.5V17M1278.5 12.5V17M1282.5 12.5V17M1285.5 12.5V17M1289.5 3.5V17M1292.5 12.5V17M1296.5 12.5V17M1299.5 12.5V17M1303.5 12.5V17M1306.5 12.5V17M1309.5 12.5V17M1313.5 12.5V17M1316.5 12.5V17M1320.5 12.5V17M1323.5 3.5V17M1327.5 12.5V17M1330.5 12.5V17M1333.5 12.5V17M1337.5 12.5V17M1340.5 12.5V17" stroke="#000" stroke-width="1"/>
<text x="53" y="10.2" class="rn">–20</text>
<text x="88" y="10.2" class="rn">–10</text>
<text x="122" y="10.2" class="rn">0</text>
<text x="156" y="10.2" class="rn">10</text>
<text x="191" y="10.2" class="rn">20</text>
<text x="225" y="10.2" class="rn">30</text>
<text x="260" y="10.2" class="rn">40</text>
<text x="294" y="10.2" class="rn">50</text>
<text x="328" y="10.2" class="rn">60</text>
<text x="363" y="10.2" class="rn">70</text>
<text x="397" y="10.2" class="rn">80</text>
<text x="431" y="10.2" class="rn">90</text>
<text x="466" y="10.2" class="rn">100</text>
<text x="500" y="10.2" class="rn">110</text>
<text x="535" y="10.2" class="rn">120</text>
<text x="569" y="10.2" class="rn">130</text>
<text x="603" y="10.2" class="rn">140</text>
<text x="638" y="10.2" class="rn">150</text>
<text x="672" y="10.2" class="rn">160</text>
<text x="706" y="10.2" class="rn">170</text>
<text x="741" y="10.2" class="rn">180</text>
<text x="775" y="10.2" class="rn">190</text>
<text x="810" y="10.2" class="rn">200</text>
<text x="844" y="10.2" class="rn">210</text>
<text x="878" y="10.2" class="rn">220</text>
<text x="913" y="10.2" class="rn">230</text>
<text x="947" y="10.2" class="rn">240</text>
<text x="981" y="10.2" class="rn">250</text>
<text x="1016" y="10.2" class="rn">260</text>
<text x="1050" y="10.2" class="rn">270</text>
<text x="1085" y="10.2" class="rn">280</text>
<text x="1119" y="10.2" class="rn">290</text>
<text x="1153" y="10.2" class="rn">300</text>
<text x="1188" y="10.2" class="rn">310</text>
<text x="1222" y="10.2" class="rn">320</text>
<text x="1256" y="10.2" class="rn">330</text>
<text x="1291" y="10.2" class="rn">340</text>
<text x="1325" y="10.2" class="rn">350</text>
<rect x="46" y="0" width="1" height="18" fill="#000"/>
<path d="M40.5 2V16M31 10.5H46" stroke="#000" stroke-dasharray="1 2"/>
<path d="M536.5 0.5h5l-2.5 5z" fill="#e01010"/><rect x="538.6" y="1" width="1.2" height="16" fill="#e01010"/>
</svg>
<svg class="a" style="left:29px;top:191px" width="18" height="378">
<rect x="0" y="0" width="17" height="378" fill="#fff"/>
<rect x="17" y="0" width="1" height="378" fill="#000"/>
<path d="M13 1.5H17M13 4.5H17M3.5 7.5H17M13 11.5H17M13 14.5H17M13 18.5H17M13 21.5H17M13 25.5H17M13 28.5H17M13 31.5H17M13 35.5H17M13 38.5H17M3.5 42.5H17M13 45.5H17M13 49.5H17M13 52.5H17M13 56.5H17M13 59.5H17M13 62.5H17M13 66.5H17M13 69.5H17M13 73.5H17M3.5 76.5H17M13 80.5H17M13 83.5H17M13 86.5H17M13 90.5H17M13 93.5H17M13 97.5H17M13 100.5H17M13 104.5H17M13 107.5H17M3.5 111.5H17M13 114.5H17M13 117.5H17M13 121.5H17M13 124.5H17M13 128.5H17M13 131.5H17M13 135.5H17M13 138.5H17M13 141.5H17M3.5 145.5H17M13 148.5H17M13 152.5H17M13 155.5H17M13 159.5H17M13 162.5H17M13 166.5H17M13 169.5H17M13 172.5H17M13 176.5H17M3.5 179.5H17M13 183.5H17M13 186.5H17M13 190.5H17M13 193.5H17M13 196.5H17M13 200.5H17M13 203.5H17M13 207.5H17M13 210.5H17M3.5 214.5H17M13 217.5H17M13 221.5H17M13 224.5H17M13 227.5H17M13 231.5H17M13 234.5H17M13 238.5H17M13 241.5H17M13 245.5H17M3.5 248.5H17M13 251.5H17M13 255.5H17M13 258.5H17M13 262.5H17M13 265.5H17M13 269.5H17M13 272.5H17M13 276.5H17M13 279.5H17M3.5 282.5H17M13 286.5H17M13 289.5H17M13 293.5H17M13 296.5H17M13 300.5H17M13 303.5H17M13 306.5H17M13 310.5H17M13 313.5H17M3.5 317.5H17M13 320.5H17M13 324.5H17M13 327.5H17M13 331.5H17M13 334.5H17M13 337.5H17M13 341.5H17M13 344.5H17M13 348.5H17M3.5 351.5H17M13 355.5H17M13 358.5H17M13 361.5H17M13 365.5H17M13 368.5H17M13 372.5H17M13 375.5H17" stroke="#000" stroke-width="1"/>
<text transform="translate(10.3 9) rotate(-90)" text-anchor="end" class="rv">10</text>
<text transform="translate(10.3 44) rotate(-90)" text-anchor="end" class="rv">20</text>
<text transform="translate(10.3 78) rotate(-90)" text-anchor="end" class="rv">30</text>
<text transform="translate(10.3 113) rotate(-90)" text-anchor="end" class="rv">40</text>
<text transform="translate(10.3 147) rotate(-90)" text-anchor="end" class="rv">50</text>
<text transform="translate(10.3 181) rotate(-90)" text-anchor="end" class="rv">60</text>
<text transform="translate(10.3 216) rotate(-90)" text-anchor="end" class="rv">70</text>
<text transform="translate(10.3 250) rotate(-90)" text-anchor="end" class="rv">80</text>
<text transform="translate(10.3 284) rotate(-90)" text-anchor="end" class="rv">90</text>
<text transform="translate(10.3 319) rotate(-90)" text-anchor="end" class="rv">100</text>
<text transform="translate(10.3 353) rotate(-90)" text-anchor="end" class="rv">110</text>
<text transform="translate(10.3 388) rotate(-90)" text-anchor="end" class="rv">120</text>
<path d="M1 271.5l5 4-5 4z" fill="#e01010"/><rect x="1" y="275.3" width="16" height="1.2" fill="#e01010"/>
</svg>
<div id="gray" class="a"></div>
<div id="canvas" class="a">
<div class="a" style="left:0;top:0;width:2px;height:378px;background:linear-gradient(90deg,#dc7884 0 50%,#a82c3a 50%)"></div>
<div class="a" style="left:12px;top:0;width:1px;height:378px;background:#7a7a7a"></div>
<div class="a" style="left:734px;top:0;width:1px;height:378px;background:#c42a2a"></div>
<div class="a dh" style="left:81px;top:42px;width:584px"></div>
<div class="a dv" style="left:81px;top:42px;height:336px"></div>
<div class="a dv" style="left:665px;top:42px;height:336px"></div>
<div class="a dh" style="left:803px;top:42px;width:431px"></div>
<div class="a dv" style="left:803px;top:42px;height:336px"></div>
<div class="a" style="left:182.6px;top:93.5px;width:177.2px;height:97.5px;border-radius:8.5px;background:#c00000"></div>
<div class="a" style="left:442.5px;top:94.5px;width:149px;height:149px;border-radius:50%;background:#c00000"></div>
<div class="a mk" style="left:220.5px;top:112.5px;font-size:52px;line-height:60px;transform:scaleX(.668);transform-origin:0 0">MAKE</div>
<div class="a mk" style="left:473.5px;top:165.5px;font-size:44.5px;line-height:50px;transform:scaleX(.678);transform-origin:0 0">MAKE</div>
</div>
<div id="vscroll" class="a">
<svg class="a" style="left:0;top:0" width="8" height="396">
 <path d="M3.5 11.5l4-4v4z" fill="#555"/>
 <rect x="1.5" y="45.5" width="10" height="16" rx="2" fill="#f0f0f0" stroke="#9a9a9a"/>
 <path d="M5 50.5h4M5 52.5h4M5 54.5h4M5 56.5h4" stroke="#777"/>
 <path d="M3.5 385.5h4v4z" fill="#555"/>
</svg></div>
</body></html>
